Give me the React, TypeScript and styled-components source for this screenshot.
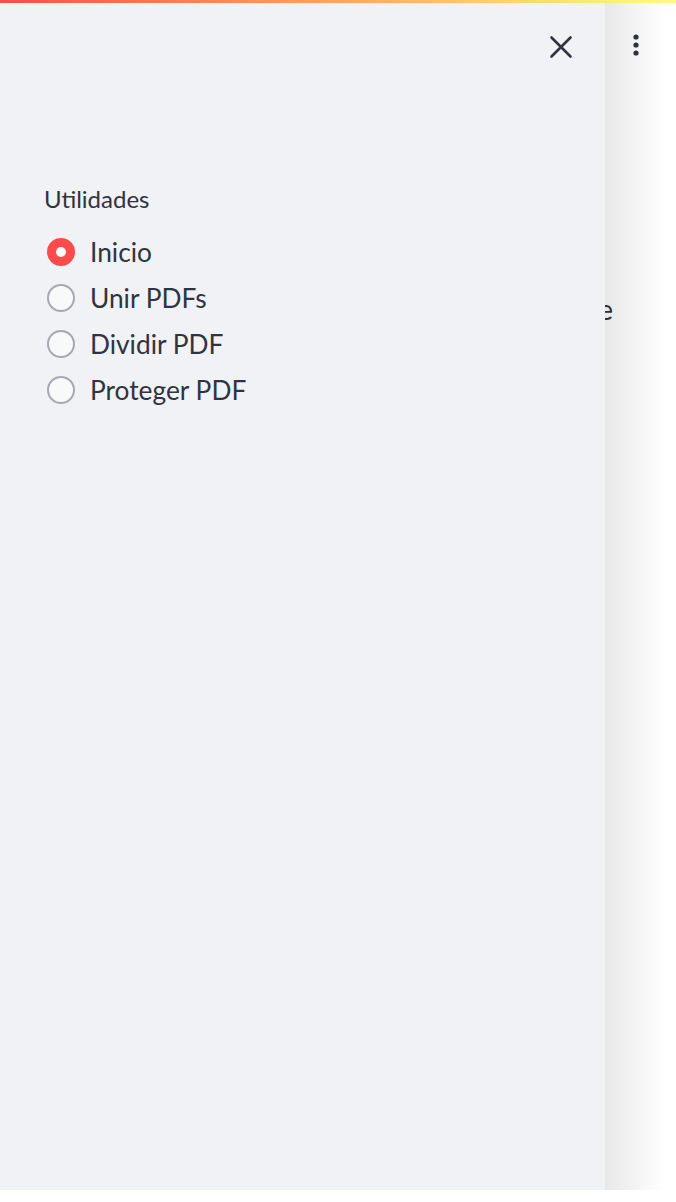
import React, { useState } from "react";
import styled, { createGlobalStyle } from "styled-components";

const GlobalStyle = createGlobalStyle`
  html, body {
    margin: 0;
    padding: 0;
    background: #ffffff;
  }
  body {
    font-family: "Lato", "Open Sans", "Liberation Sans", sans-serif;
    color: #31333f;
  }
  * { box-sizing: border-box; }
`;

const Page = styled.div`
  position: relative;
  width: 676px;
  height: 1190px;
  overflow: hidden;
  background: #ffffff;
  display: flex;
  flex-direction: column;
`;

const Decoration = styled.div`
  position: absolute;
  top: 0;
  left: 0;
  right: 0;
  height: 3px;
  z-index: 10;
  background: linear-gradient(90deg, rgb(255, 75, 75), rgb(255, 253, 128));
`;

const Main = styled.main`
  flex: 1;
  display: flex;
  flex-direction: column;
  padding-top: 20px;
`;

const MenuButton = styled.button`
  align-self: flex-end;
  margin-right: 28px;
  margin-top: 10px;
  width: 24px;
  height: 30px;
  border: none;
  background: transparent;
  padding: 0;
  display: flex;
  align-items: center;
  justify-content: center;
  cursor: pointer;
`;

const MainText = styled.div`
  margin-top: 231px;
  width: 613px;
  white-space: nowrap;
  text-align: right;
  font-size: 28px;
  line-height: 36px;
  color: #31333f;
`;

const Sidebar = styled.aside`
  position: absolute;
  top: 0;
  left: 0;
  bottom: 0;
  width: 605px;
  background: #f0f2f6;
  z-index: 5;
  display: flex;
  flex-direction: column;
  padding: 0 0 0 44px;

  &::after {
    content: "";
    position: absolute;
    top: 0;
    bottom: 0;
    left: 100%;
    width: 60px;
    background: linear-gradient(90deg, rgba(0, 0, 0, 0.09), rgba(0, 0, 0, 0));
    pointer-events: none;
  }
`;

const SidebarHeader = styled.div`
  display: flex;
  justify-content: flex-end;
  padding: 33px 30px 0 0;
  height: 94px;
`;

const CloseButton = styled.button`
  width: 28px;
  height: 28px;
  border: none;
  background: transparent;
  padding: 0;
  display: flex;
  align-items: center;
  justify-content: center;
  cursor: pointer;
`;

const WidgetLabel = styled.div`
  margin-top: 89px;
  font-size: 24px;
  line-height: 32px;
  color: #31333f;
`;

const RadioGroup = styled.div`
  display: flex;
  flex-direction: column;
  margin-top: 14px;
`;

const RadioRow = styled.label`
  display: flex;
  align-items: center;
  height: 46px;
  gap: 15px;
  cursor: pointer;
  padding-left: 3px;
`;

const RadioCircle = styled.span<{ $checked: boolean }>`
  flex: none;
  width: 28px;
  height: 28px;
  border-radius: 50%;
  border: ${(p) => (p.$checked ? "9px solid #ff4b4b" : "2px solid #a6a8b2")};
  background: ${(p) => (p.$checked ? "#ffffff" : "#f8f9fb")};
`;

const RadioText = styled.span`
  font-size: 26.3px;
  line-height: 34px;
  color: #31333f;
`;

const options = ["Inicio", "Unir PDFs", "Dividir PDF", "Proteger PDF"];

export default function App() {
  const [selected, setSelected] = useState(0);
  return (
    <>
      <GlobalStyle />
      <Page>
        <Decoration />
        <Main>
          <MenuButton aria-label="Menú">
            <svg width="6" height="24" viewBox="0 0 6 24">
              <circle cx="3" cy="4" r="2.6" fill="#31333f" />
              <circle cx="3" cy="12" r="2.6" fill="#31333f" />
              <circle cx="3" cy="20" r="2.6" fill="#31333f" />
            </svg>
          </MenuButton>
          <MainText>Elige una utilidad del menú lateral para que</MainText>
        </Main>
        <Sidebar>
          <SidebarHeader>
            <CloseButton aria-label="Cerrar">
              <svg width="24" height="24" viewBox="0 0 24 24">
                <path d="M2.5 2.5 L21.5 21.5 M21.5 2.5 L2.5 21.5" stroke="#31333f" strokeWidth="2.6" strokeLinecap="round" fill="none" />
              </svg>
            </CloseButton>
          </SidebarHeader>
          <WidgetLabel>Utilidades</WidgetLabel>
          <RadioGroup role="radiogroup">
            {options.map((o, i) => (
              <RadioRow key={o} onClick={() => setSelected(i)}>
                <RadioCircle $checked={selected === i} />
                <RadioText>{o}</RadioText>
              </RadioRow>
            ))}
          </RadioGroup>
        </Sidebar>
      </Page>
    </>
  );
}
